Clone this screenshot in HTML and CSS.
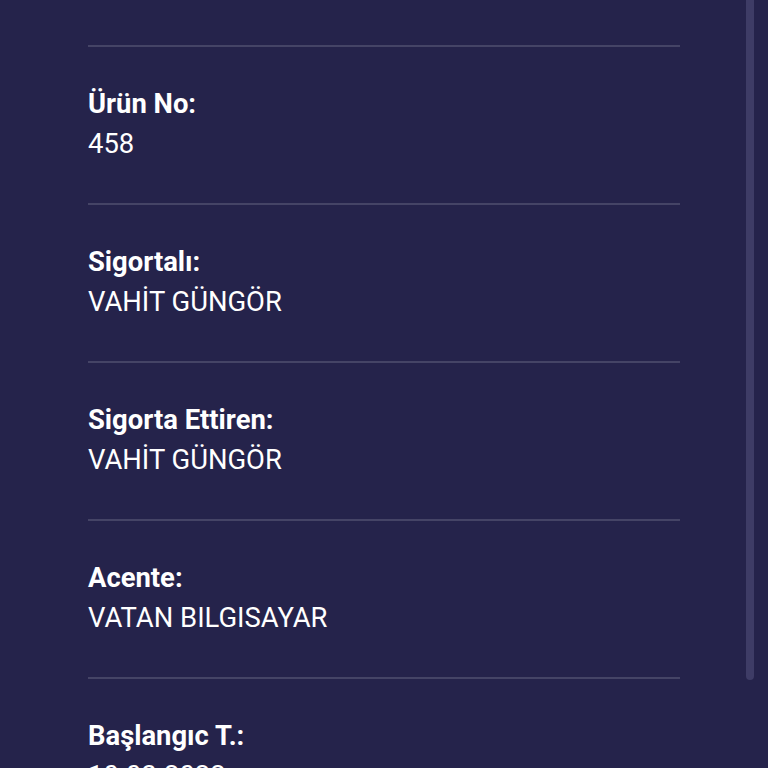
FILE: index.html
```html
<!DOCTYPE html>
<html lang="tr">
<head>
  <meta charset="UTF-8">
  <meta name="viewport" content="width=device-width,initial-scale=1"/>
  <title>Poliçe Detayı</title>
  <link rel="stylesheet" href="styles.css">
</head>
<body>
  <div class="padre">
    <ul class="detay">
      <li>
        <h2>Ürün No:</h2>
        <span>458</span>
      </li>
      <li>
        <h2>Sigortalı:</h2>
        <span>VAHİT GÜNGÖR</span>
      </li>
      <li>
        <h2>Sigorta Ettiren:</h2>
        <span>VAHİT GÜNGÖR</span>
      </li>
      <li>
        <h2>Acente:</h2>
        <span>VATAN BILGISAYAR</span>
      </li>
      <li>
        <h2>Başlangıc T.:</h2>
        <span>10.03.2022</span>
      </li>
    </ul>
  </div>
  <div class="scroll"></div>
</body>
</html>
```

FILE: styles.css
```css
*{
  margin: 0; padding: 0;
  font-family: Roboto, "Liberation Sans", sans-serif;
}
html, body{
  background: #25234b;
  height: 100%;
  overflow: hidden;
}
.padre{
  width: 592px;
  margin-left: 88px;
  padding-top: 45px;
}
.detay{
  list-style: none;
  border-top: 2px solid #454466;
}
.detay li{
  display: flex;
  flex-direction: column;
  padding: 37px 0 39px;
  border-bottom: 2px solid #454466;
  color: #fff;
}
h2{
  font-size: 27.4px;
  font-weight: 700;
  line-height: 40px;
}
span{
  font-size: 27.4px;
  font-weight: 400;
  line-height: 40px;
}
.scroll{
  position: fixed;
  top: 0;
  left: 746px;
  width: 8px;
  height: 680px;
  background: #3e3c66;
  border-radius: 0 0 4px 4px;
}
```
